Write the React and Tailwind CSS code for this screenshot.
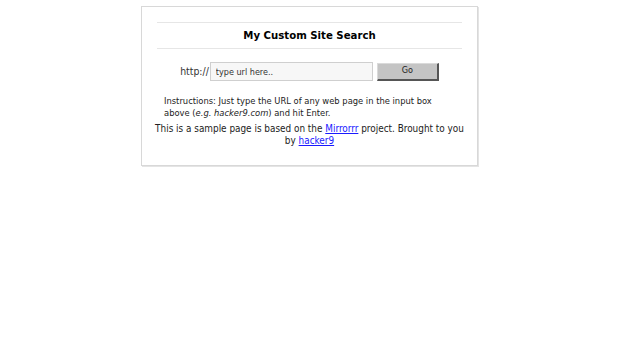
import React from "react";

const App = () => {
  return (
    <div className="w-full min-h-[343px] bg-white pt-[6px] font-['DejaVu_Sans_Condensed','DejaVu_Sans',Verdana,sans-serif] text-[9.3px] text-[#222]">
      <div className="ml-[141px] w-[337px] border border-[#d8d8d8] shadow-[1px_1px_0_#e4e4e4] px-[15px] pt-[15px] pb-[18px]">
        {/* Title */}
        <div className="border-t border-b border-[#e6e6e6] h-[27px] flex items-center justify-center pt-[2px]">
          <h1 className="text-[11.3px] font-bold text-black">My Custom Site Search</h1>
        </div>

        {/* Search form */}
        <div className="flex items-center justify-center mt-[13px]">
          <span className="mr-[1px] text-[10.4px] text-[#333]">http://</span>
          <input
            type="text"
            placeholder="type url here.."
            className="w-[163px] h-[19px] border border-[#cfcfcf] bg-[#f7f7f7] px-[5px] text-[9px] placeholder:text-[#333] outline-none"
          />
          <button className="ml-[4px] w-[62px] h-[18px] bg-[#c4c4c4] border-t border-l border-[#dadada] border-r-2 border-b-2 border-r-[#555] border-b-[#555] text-[9px] text-[#222]">
            Go
          </button>
        </div>

        {/* Instructions */}
        <p className="mt-[14px] mx-[7px] leading-[12px] text-[#222]">
          Instructions: Just type the URL of any web page in the input box above (<i>e.g. hacker9.com</i>) and hit Enter.
        </p>

        <p className="mt-[4px] -mx-[3px] text-center text-[9.9px] leading-[12px] text-[#222]">
          This is a sample page is based on the{" "}
          <a href="#" className="text-[#1a1aff] underline">Mirrorrr</a> project. Brought to you by{" "}
          <a href="#" className="text-[#1a1aff] underline">hacker9</a>
        </p>
      </div>
    </div>
  );
};

export default App;
